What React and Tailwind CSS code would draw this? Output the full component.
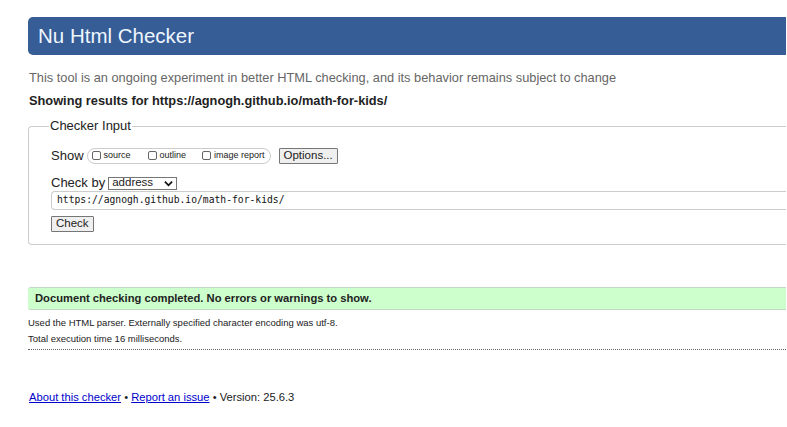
import React from 'react';

const App = () => {
  return (
    <div className="min-h-[427px] bg-white pl-[28px] pr-[1px] pt-[17px] text-[#222] font-['Liberation_Sans',Arial,sans-serif]">
      {/* Title bar */}
      <div className="h-[38px] rounded-l-[5px] bg-[#365d95] pl-[10px] flex items-center">
        <h1 className="text-[20.5px] leading-none text-[#eef6ff]">Nu Html Checker</h1>
      </div>

      <p className="mt-[15px] pl-[1px] text-[12.8px] leading-[16px] text-[#666]">
        This tool is an ongoing experiment in better HTML checking, and its behavior remains subject to change
      </p>
      <p className="mt-[7px] pl-[1px] text-[12.8px] leading-[16px] font-bold text-[#222]">
        Showing results for https://agnogh.github.io/math-for-kids/
      </p>

      {/* Checker input fieldset */}
      <fieldset className="mt-[9px] border border-[#ccc] rounded-l-[4px] border-r-0 pl-[22px] pb-[10px] pt-[4px]">
        <legend className="text-[13px] leading-[16px] px-[1px] -ml-[2px]">Checker Input</legend>

        <div className="flex items-center mt-[9px] h-[17px]">
          <span className="text-[13px] mr-[3px]">Show</span>
          <div className="flex items-center h-[16px] border border-[#ccc] rounded-[8px] pl-[4px] pr-[5px] text-[9px] text-[#222]">
            <label className="flex items-center">
              <span className="inline-block w-[9px] h-[9px] border border-[#666] rounded-[2px] bg-white mr-[3px]"></span>
              source
            </label>
            <label className="flex items-center ml-[17px]">
              <span className="inline-block w-[9px] h-[9px] border border-[#666] rounded-[2px] bg-white mr-[3px]"></span>
              outline
            </label>
            <label className="flex items-center ml-[16px]">
              <span className="inline-block w-[9px] h-[9px] border border-[#666] rounded-[2px] bg-white mr-[3px]"></span>
              image report
            </label>
          </div>
          <button className="ml-[8px] h-[16px] w-[59px] text-[11.5px] leading-none bg-[#efefef] border border-[#767676] rounded-[1px]">
            Options...
          </button>
        </div>

        <div className="flex items-center mt-[12px] h-[14px]">
          <span className="text-[13px] mr-[3px]">Check by</span>
          <div className="flex items-center justify-between w-[69px] h-[13px] border border-[#767676] pl-[3px] pr-[3px] text-[11.5px] leading-none">
            <span>address</span>
            <svg width="9" height="7" viewBox="0 0 10 7">
              <path d="M1 1.5l4 4 4-4" fill="none" stroke="#111" strokeWidth="2" />
            </svg>
          </div>
        </div>

        <div className="mt-[1px] h-[19px] border border-[#ccc] border-r-0 rounded-l-[4px] flex items-center pl-[5px] font-['DejaVu_Sans_Mono',monospace] text-[9.7px] text-[#111]">
          https://agnogh.github.io/math-for-kids/
        </div>

        <button className="mt-[6px] h-[16px] px-[4px] text-[11.5px] leading-none bg-[#efefef] border border-[#767676] rounded-[1px]">
          Check
        </button>
      </fieldset>

      {/* Result */}
      <div className="mt-[42px] h-[23px] bg-[#ccffcc] border-y border-[#c4d7c4] rounded-l-[3px] flex items-center pl-[7px] text-[11.2px] font-bold text-[#222]">
        Document checking completed. No errors or warnings to show.
      </div>
      <p className="mt-[7px] text-[9.5px] leading-[12px] text-[#222]">
        Used the HTML parser. Externally specified character encoding was utf-8.
      </p>
      <p className="mt-[4px] text-[9.5px] leading-[12px] text-[#222]">
        Total execution time 16 milliseconds.
      </p>
      <div className="mt-[4px] border-b border-dotted border-[#666]"></div>

      <p className="mt-[40px] pl-[1px] text-[11.2px] leading-[14px] text-[#222]">
        <a href="#" className="underline text-[#0000cc]">About this checker</a>
        {' \u2022 '}
        <a href="#" className="underline text-[#0000cc]">Report an issue</a>
        {' \u2022 Version: 25.6.3'}
      </p>
    </div>
  );
};

export default App;
